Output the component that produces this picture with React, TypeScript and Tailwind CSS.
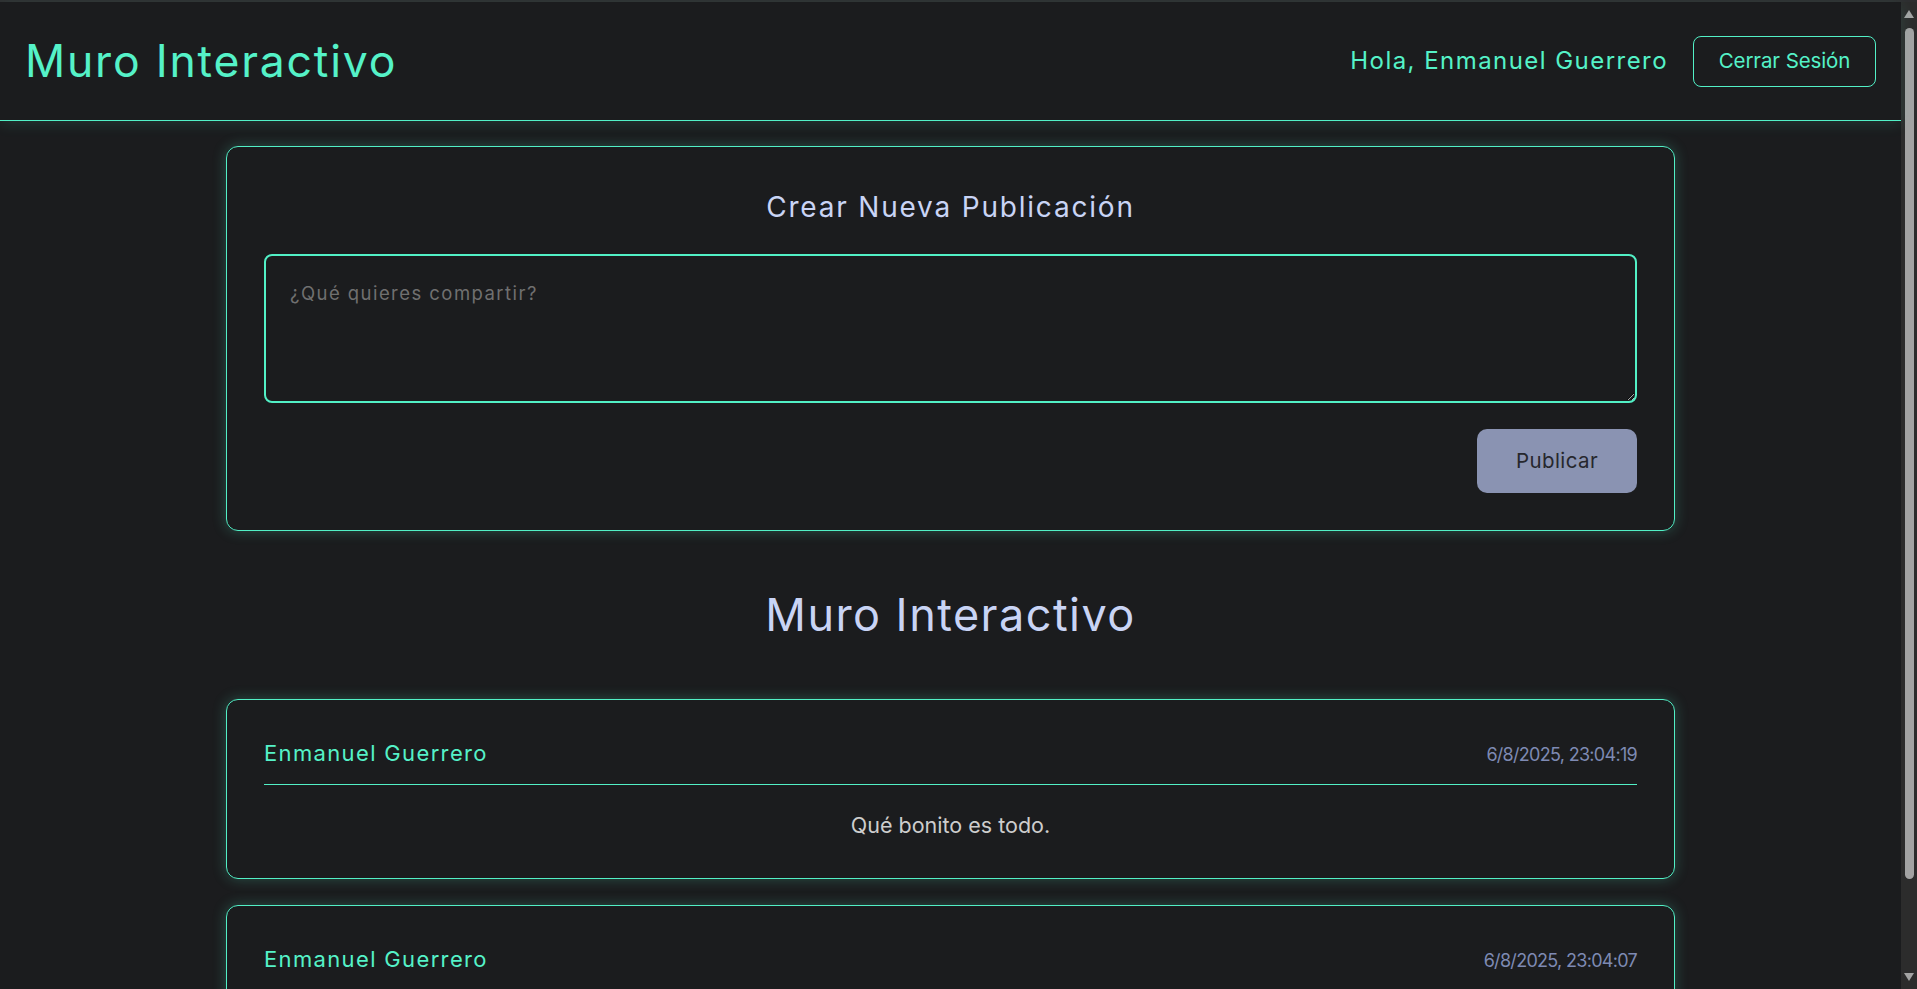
import React from "react";

const posts = [
  { author: "Enmanuel Guerrero", date: "6/8/2025, 23:04:19", text: "Qué bonito es todo." },
  { author: "Enmanuel Guerrero", date: "6/8/2025, 23:04:07", text: "" },
];

function Scrollbar() {
  return (
    <div className="relative w-[16px] shrink-0 bg-[#2c2c2c] flex flex-col items-center">
      <svg width="10" height="8" viewBox="0 0 10 8" className="mt-[8px]">
        <path d="M5 0 L10 8 L0 8 Z" fill="#a3a3a3" />
      </svg>
      <div className="mt-[10px] w-[9px] h-[851px] rounded-full bg-[#a3a3a3]" />
      <div className="flex-1" />
      <svg width="10" height="8" viewBox="0 0 10 8" className="mb-[8px]">
        <path d="M0 0 L10 0 L5 8 Z" fill="#a3a3a3" />
      </svg>
    </div>
  );
}

export default function App() {
  return (
    <div className="h-[989px] overflow-hidden bg-[#1b1c1e] flex flex-col font-['Inter',sans-serif]">
      <div className="h-[2px] shrink-0 bg-[#2e2e30]" />
      <div className="flex flex-1 min-h-0">
        <div className="flex-1 min-w-0 flex flex-col">
          <header className="h-[119px] shrink-0 flex items-center justify-between px-[25px] border-b border-[#52f0c6] shadow-[0_3px_14px_rgba(82,240,198,0.12)] relative z-10">
            <h1 className="text-[44.5px] leading-normal text-[#55f2c8] tracking-[1.8px]">Muro Interactivo</h1>
            <div className="flex items-center gap-[25px]">
              <span className="text-[24px] leading-normal text-[#55f2c8] tracking-[1.45px]">Hola, Enmanuel Guerrero</span>
              <button className="w-[183px] h-[51px] flex items-center justify-center rounded-[8px] border border-[#52f0c6] text-[20.5px] text-[#55f2c8] tracking-[-0.1px]">
                Cerrar Sesión
              </button>
            </div>
          </header>
          <main className="flex-1 flex flex-col items-center pt-[25px]">
            <section className="w-[1449px] shrink-0 rounded-[12px] border border-[#52f0c6] p-[37px] shadow-[0_0_14px_rgba(82,240,198,0.25)]">
              <h2 className="text-center text-[28px] leading-[46px] text-[#c9d4f5] tracking-[1.8px] mb-[24px]">Crear Nueva Publicación</h2>
              <textarea
                className="block w-full h-[149px] rounded-[8px] border-2 border-[#52f0c6] bg-transparent pl-[24px] pr-[22px] pt-[22px] text-[18.5px] leading-[30px] text-[#d0d0d0] placeholder:text-[#707070] outline-none tracking-[1.45px]"
                placeholder="¿Qué quieres compartir?"
              />
              <div className="flex justify-end mt-[26px]">
                <button className="w-[160px] h-[64px] rounded-[10px] bg-[#8a93b2] text-[20.5px] text-[#26272d] tracking-[0.4px]">Publicar</button>
              </div>
            </section>
            <h2 className="mt-[57px] mb-[57px] text-[45px] leading-[54px] text-[#c9d4f5] tracking-[1.45px]">Muro Interactivo</h2>
            <div className="flex flex-col gap-[26px]">
              {posts.map((p, i) => (
                <article key={i} className="w-[1449px] shrink-0 rounded-[12px] border border-[#52f0c6] px-[37px] pt-[37px] pb-[37px] shadow-[0_0_14px_rgba(82,240,198,0.25)]">
                  <div className="flex justify-between items-baseline pb-[13px] border-b border-[#52f0c6]">
                    <span className="text-[22px] leading-[33px] text-[#55f2c8] tracking-[1.35px]">{p.author}</span>
                    <span className="text-[18px] leading-[33px] text-[#7e8ab3] tracking-[-0.7px]">{p.date}</span>
                  </div>
                  <p className="mt-[24px] h-[32px] text-center text-[21.5px] leading-[32px] text-[#cdcdcd]">{p.text}</p>
                </article>
              ))}
            </div>
          </main>
        </div>
        <Scrollbar />
      </div>
    </div>
  );
}
